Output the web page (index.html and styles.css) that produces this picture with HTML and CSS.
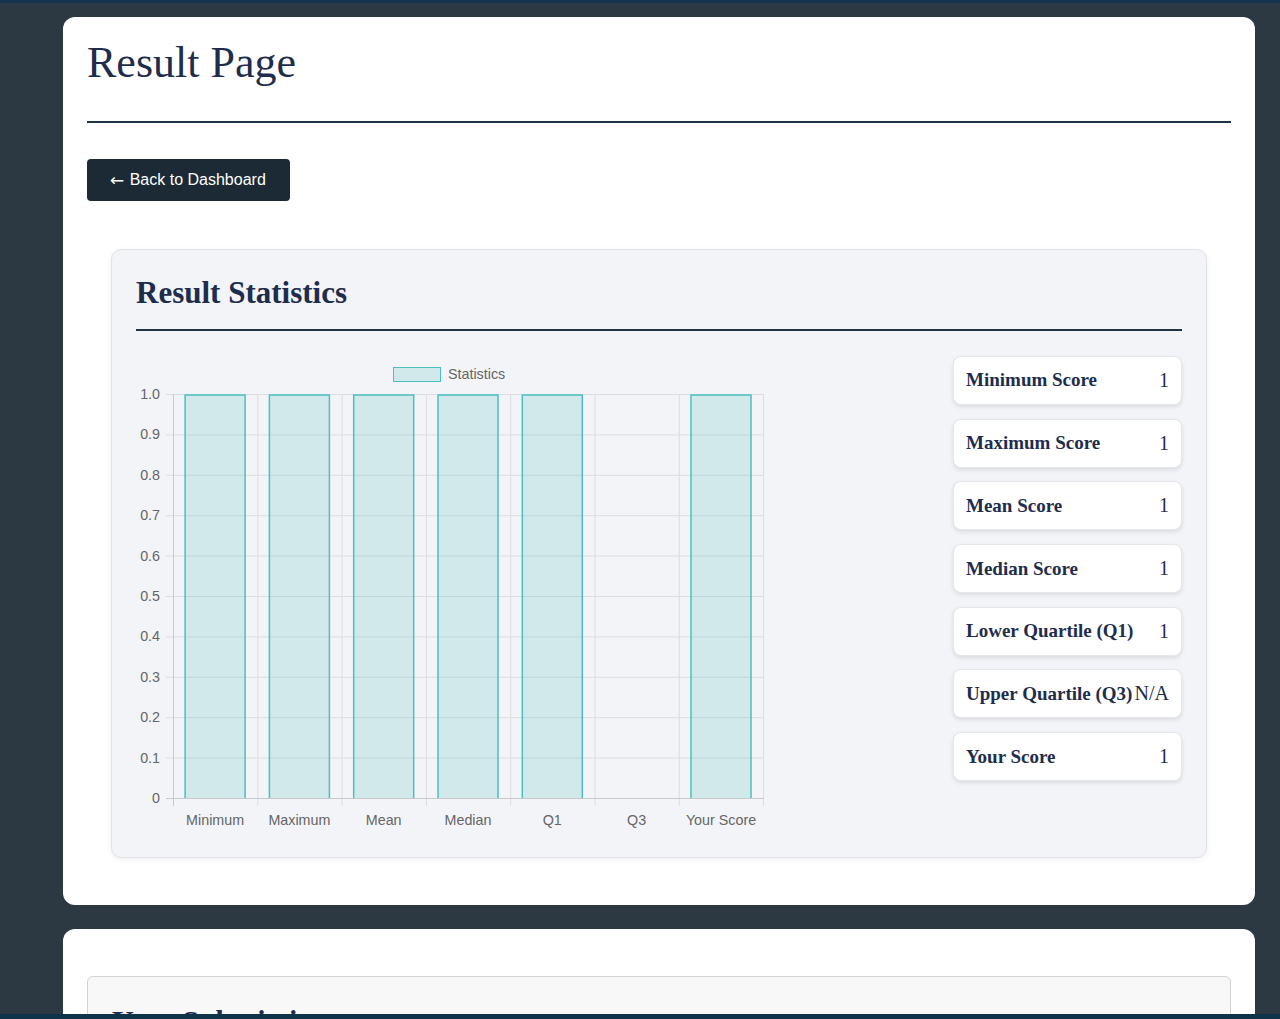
FILE: index.html
```html
<!DOCTYPE html>
<html>
<head>
<meta charset="utf-8">
<title>Result Page</title>
<link rel="stylesheet" href="styles.css">
</head>
<body>
<div class="topbar"></div>
<main class="page">
  <section class="card">
    <h1 class="page-title">Result Page</h1>
    <div class="rule"></div>
    <a class="btn-back" href="#"><span class="arrow">&larr;</span> Back to Dashboard</a>

    <div class="stats-card">
      <h2 class="stats-title">Result Statistics</h2>
      <div class="rule"></div>
      <div class="stats-row">
        <div class="chart">
          <svg width="640" height="480" viewBox="0 0 640 480" xmlns="http://www.w3.org/2000/svg" font-family="Liberation Sans, Arial, sans-serif" font-size="14.3" fill="#666">
            <!-- legend -->
            <rect x="257.5" y="11.5" width="47" height="14" fill="rgba(75,192,192,0.2)" stroke="rgb(75,192,192)" stroke-width="1"/>
            <text x="312" y="23">Statistics</text>
            <!-- horizontal grid -->
            <g stroke="#dcdde0" stroke-width="1">
              <line x1="30" y1="38.5" x2="627" y2="38.5"/>
              <line x1="30" y1="78.9" x2="627" y2="78.9"/>
              <line x1="30" y1="119.3" x2="627" y2="119.3"/>
              <line x1="30" y1="159.7" x2="627" y2="159.7"/>
              <line x1="30" y1="200.1" x2="627" y2="200.1"/>
              <line x1="30" y1="240.5" x2="627" y2="240.5"/>
              <line x1="30" y1="280.9" x2="627" y2="280.9"/>
              <line x1="30" y1="321.3" x2="627" y2="321.3"/>
              <line x1="30" y1="361.7" x2="627" y2="361.7"/>
              <line x1="30" y1="402.1" x2="627" y2="402.1"/>
            </g>
            <!-- vertical grid -->
            <g stroke="#dcdde0" stroke-width="1">
              <line x1="121.8" y1="38" x2="121.8" y2="450"/>
              <line x1="206.1" y1="38" x2="206.1" y2="450"/>
              <line x1="290.4" y1="38" x2="290.4" y2="450"/>
              <line x1="374.7" y1="38" x2="374.7" y2="450"/>
              <line x1="459.0" y1="38" x2="459.0" y2="450"/>
              <line x1="543.3" y1="38" x2="543.3" y2="450"/>
              <line x1="627.5" y1="38" x2="627.5" y2="450"/>
            </g>
            <!-- axes -->
            <g stroke="#c8c9cc" stroke-width="1">
              <line x1="37.5" y1="38" x2="37.5" y2="450"/>
              <line x1="30" y1="442.5" x2="628" y2="442.5"/>
            </g>
            <!-- bars -->
            <g fill="rgba(75,192,192,0.2)" stroke="rgb(75,192,192)" stroke-width="1.5">
              <path d="M49.1 442 V39 H109.1 V442"/>
              <path d="M133.4 442 V39 H193.4 V442"/>
              <path d="M217.7 442 V39 H277.7 V442"/>
              <path d="M302.0 442 V39 H362.0 V442"/>
              <path d="M386.3 442 V39 H446.3 V442"/>
              <path d="M555.0 442 V39 H615.0 V442"/>
            </g>
            <!-- y labels -->
            <g text-anchor="end">
              <text x="24" y="43">1.0</text>
              <text x="24" y="83.4">0.9</text>
              <text x="24" y="123.8">0.8</text>
              <text x="24" y="164.2">0.7</text>
              <text x="24" y="204.6">0.6</text>
              <text x="24" y="245">0.5</text>
              <text x="24" y="285.4">0.4</text>
              <text x="24" y="325.8">0.3</text>
              <text x="24" y="366.2">0.2</text>
              <text x="24" y="406.6">0.1</text>
              <text x="24" y="447">0</text>
            </g>
            <!-- x labels -->
            <g text-anchor="middle">
              <text x="79.1" y="469">Minimum</text>
              <text x="163.4" y="469">Maximum</text>
              <text x="247.7" y="469">Mean</text>
              <text x="332.0" y="469">Median</text>
              <text x="416.3" y="469">Q1</text>
              <text x="500.6" y="469">Q3</text>
              <text x="585.0" y="469">Your Score</text>
            </g>
          </svg>
        </div>
        <ul class="stat-list">
          <li class="stat"><span class="stat-label">Minimum Score</span><span class="stat-value">1</span></li>
          <li class="stat"><span class="stat-label">Maximum Score</span><span class="stat-value">1</span></li>
          <li class="stat"><span class="stat-label">Mean Score</span><span class="stat-value">1</span></li>
          <li class="stat"><span class="stat-label">Median Score</span><span class="stat-value">1</span></li>
          <li class="stat"><span class="stat-label">Lower Quartile (Q1)</span><span class="stat-value">1</span></li>
          <li class="stat"><span class="stat-label">Upper Quartile (Q3)</span><span class="stat-value">N/A</span></li>
          <li class="stat"><span class="stat-label">Your Score</span><span class="stat-value">1</span></li>
        </ul>
      </div>
    </div>
  </section>

  <section class="card card-second">
    <div class="inner-box">
      <h2 class="inner-title">Your Submissions</h2>
    </div>
  </section>
</main>
<div class="bottombar"></div>
</body>
</html>
```

FILE: styles.css
```css
html, body {
  margin: 0;
  padding: 0;
}
body {
  background: #2c3942;
  font-family: "Liberation Serif", "Times New Roman", serif;
  color: #1f2d4d;
}
.topbar {
  position: fixed;
  top: 0;
  left: 0;
  right: 0;
  height: 3px;
  background: #12344e;
  z-index: 10;
}
.bottombar {
  position: fixed;
  bottom: 0;
  left: 0;
  right: 0;
  height: 5px;
  background: #0f3349;
  z-index: 10;
}
.page {
  padding: 17px 25px 0 63px;
  display: flex;
  flex-direction: column;
  gap: 24px;
}
.card {
  background: #ffffff;
  border-radius: 12px;
  padding: 18px 24px 24px;
}
.page-title {
  margin: 0 0 31px;
  padding-top: 2px;
  font-size: 44px;
  line-height: 1.2;
  font-weight: 400;
  color: #1f2d4d;
}
.rule {
  height: 2px;
  background: #1f3346;
}
.btn-back {
  display: inline-flex;
  align-items: center;
  box-sizing: border-box;
  height: 42px;
  margin-top: 36px;
  background: #1b2a35;
  color: #ffffff;
  font-family: "Liberation Sans", Arial, sans-serif;
  font-size: 16px;
  line-height: 20px;
  padding: 0 24px 0 23px;
  border-radius: 4px;
  text-decoration: none;
  white-space: pre;
}
.arrow {
  font-family: "DejaVu Sans", sans-serif;
  font-size: 17px;
  line-height: 20px;
  margin-right: 1px;
}
.stats-card {
  margin: 48px 24px 23px;
  background: #f3f4f7;
  border: 1px solid #e1e2e6;
  border-radius: 10px;
  padding: 24px 24px 21px;
  box-shadow: 0 2px 6px rgba(0, 0, 0, 0.06);
}
.stats-title {
  margin: 0 0 18px;
  font-size: 31px;
  line-height: 1.2;
  font-weight: 700;
  color: #1f2d4d;
}
.stats-row {
  margin-top: 25px;
  display: flex;
  justify-content: space-between;
  align-items: flex-start;
}
.chart svg {
  display: block;
}
.stat-list {
  list-style: none;
  margin: 0;
  padding: 0;
  width: 229px;
  display: flex;
  flex-direction: column;
  gap: 13.7px;
}
.stat {
  display: flex;
  justify-content: space-between;
  align-items: center;
  height: 49px;
  box-sizing: border-box;
  padding: 0 12px 0 12px;
  background: #ffffff;
  border: 1px solid #e6e7ea;
  border-radius: 8px;
  box-shadow: 0 2px 4px rgba(0, 0, 0, 0.1);
  white-space: nowrap;
}
.stat-label {
  font-weight: 700;
  font-size: 19px;
  color: #1f2d4d;
}
.stat-value {
  font-size: 20px;
  color: #1f2d4d;
}
.card-second {
  padding: 47px 24px 0;
  min-height: 120px;
}
.inner-box {
  background: #f8f8f8;
  border: 1px solid #d2d2d2;
  border-radius: 6px;
  padding: 26px 24px 24px;
}
.inner-title {
  margin: 0;
  font-size: 30px;
  line-height: 1.2;
  font-weight: 700;
  color: #1f2d4d;
}
```
